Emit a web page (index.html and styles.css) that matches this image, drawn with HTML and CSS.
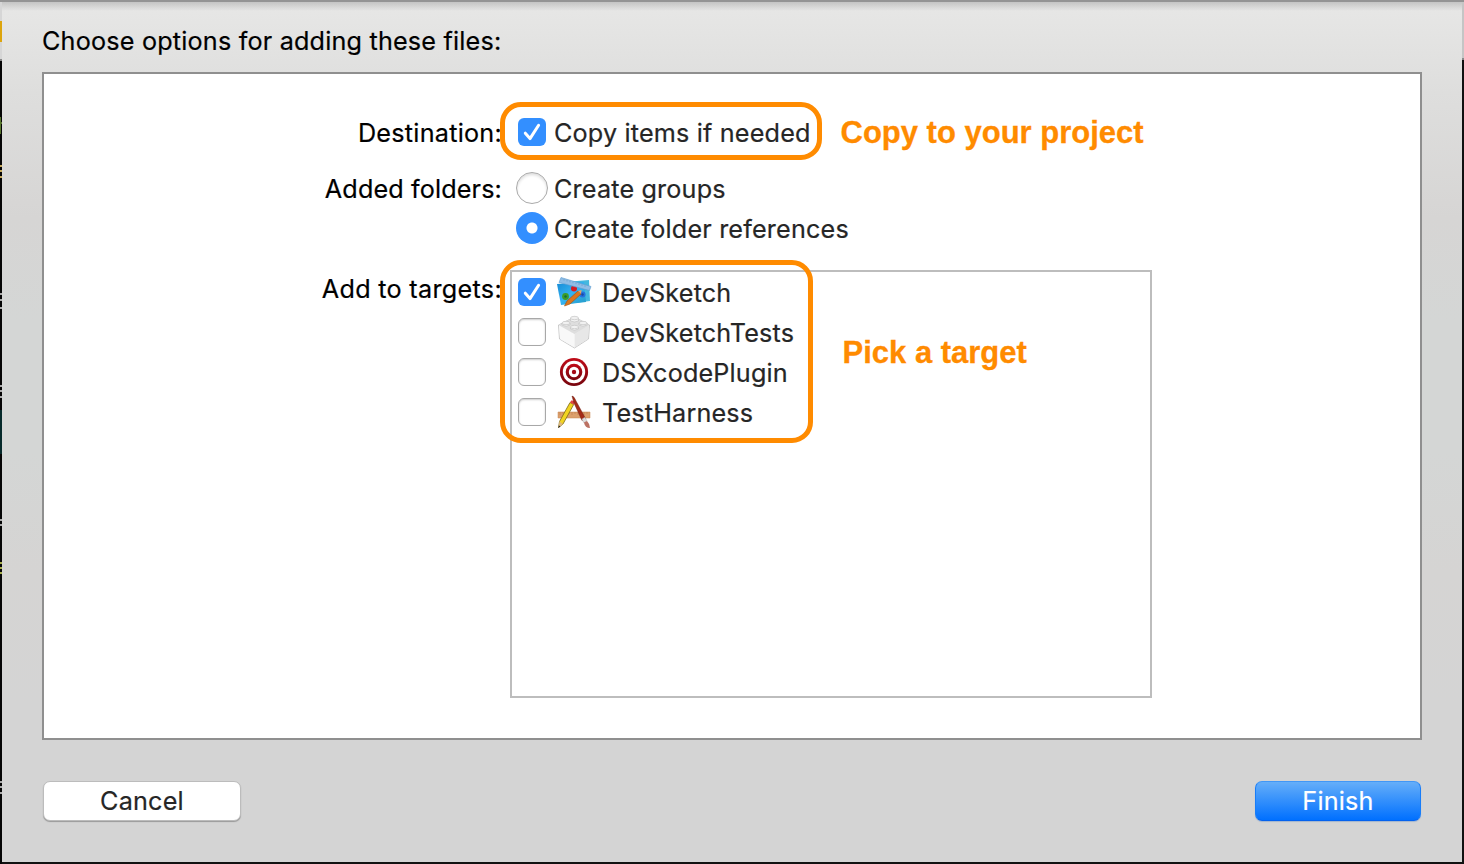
FILE: index.html
```html
<!DOCTYPE html>
<html lang="en">
<head>
<meta charset="utf-8">
<title>Add files</title>
<link rel="stylesheet" href="styles.css">
</head>
<body>
<div class="window">
  <svg class="edge" width="2" height="864" viewBox="0 0 2 864" aria-hidden="true">
    <rect width="2" height="60" fill="#d6d6d6"/><rect y="21" width="2" height="21" fill="#dda50d"/><rect y="59" width="2" height="2" fill="#888"/>
    <path d="M0 117h1v17h-1zM0 122h2v2h-2z" fill="#57752e"/>
    <path d="M0 165h2v2h-2zM0 170h2v2h-2zM0 176h2v2h-2z" fill="#c5a85b"/>
    <path d="M0 293h2v2h-2zM0 299h2v2h-2zM0 307h2v2h-2zM0 385h2v2h-2zM0 390h2v2h-2zM0 396h2v2h-2zM0 519h2v2h-2zM0 524h2v2h-2zM0 781h2v2h-2zM0 786h2v2h-2zM0 792h2v2h-2z" fill="#aaa"/>
    <rect y="410" width="2" height="44" fill="#062a2b"/>
    <path d="M0 562h2v2h-2zM0 567h2v2h-2zM0 572h2v2h-2z" fill="#a5ad4b"/>
  </svg>
  <main class="sheet">
    <h1 class="title">Choose options for adding these files:</h1>
    <section class="panel">
      <div class="row row-destination">
        <span class="label label-destination">Destination:</span>
        <label class="option"><span class="check checked"><svg viewBox="0 0 28 28"><path d="M7.3 15.2L12 20.6L20.6 7.3"/></svg></span><span>Copy items if needed</span></label>
        <span class="outline outline-copy"></span>
        <strong class="note note-copy">Copy to your project</strong>
      </div>
      <div class="row row-folders">
        <span class="label">Added folders:</span>
        <div class="stack">
          <label class="option"><span class="radio"></span><span>Create groups</span></label>
          <label class="option"><span class="radio selected"></span><span>Create folder references</span></label>
        </div>
      </div>
      <div class="row row-targets">
        <span class="label label-targets">Add to targets:</span>
        <div class="targets">
          <label class="target"><span class="check checked"><svg viewBox="0 0 28 28"><path d="M7.3 15.2L12 20.6L20.6 7.3"/></svg></span>
            <svg class="icon" viewBox="0 0 36 36">
              <defs><linearGradient id="card" x2="1" y2="1"><stop stop-color="#168ad5"/><stop offset=".5" stop-color="#35b3f2"/><stop offset="1" stop-color="#249bc7"/></linearGradient></defs>
              <path d="M9 8L33 6L34 27L11 30Z" fill="#45b8de"/><path d="M1 10L28 8L30 28L5 31Z" fill="url(#card)"/>
              <circle cx="18" cy="14.5" r="3" fill="#d51b22"/><circle cx="9.5" cy="22.5" r="3.4" fill="#3c9c28"/><circle cx="9.5" cy="22.5" r="1.2" fill="#17683a"/><circle cx="26.5" cy="20.5" r="3" fill="#2870dc"/><circle cx="26.5" cy="20.5" r="1.2" fill="#174da3"/>
              <path d="M5 3.5L35 12.5L33.5 16.5L3 8.5Z" fill="#90bde5" stroke="#5a9acf" stroke-width=".6"/><path d="M8 5v1.5m3-.6v1.5m3-.6v1.5m3-.6v1.5m3-.6v1.5m3-.6v1.5m3-.6v1.5m3-.6v1.5" stroke="#568fbd" stroke-width=".5"/>
              <path d="M22 17L25 20L14 30L8.5 32L11 27Z" fill="#dc751c" stroke="#9e5010" stroke-width=".6"/><path d="M22 17L25 20L25.5 16Z" fill="#e8a565"/>
            </svg><span>DevSketch</span></label>
          <label class="target"><span class="check"></span>
            <svg class="icon" viewBox="0 0 36 36">
              <path d="M2.5 11L18.5 3L33.5 11L32.5 25L18.5 34L3.5 25Z" fill="#f3f3f3" stroke="#b5b5b5" stroke-width=".7"/><path d="M18.5 20L33 11L32 25L18.5 33.5Z" fill="#e7e7e7"/><path d="M3 11L18.5 20V33.5L4 25Z" fill="#f8f8f8"/><path d="M2.5 11L18.5 3L33.5 11L18.5 20Z" fill="#dedede"/>
              <g fill="#f1f1f1" stroke="#bdbdbd" stroke-width=".6"><path d="M14.5 4v3q4 2 8 0V4"/><ellipse cx="18.5" cy="4" rx="4" ry="1.7"/><path d="M6 9v2q4.5 2.5 8 0V9"/><ellipse cx="10" cy="9" rx="4" ry="1.7"/><path d="M23 9v2q4 2.5 8 0V9"/><ellipse cx="27" cy="9" rx="4" ry="1.7"/><path d="M14.5 13v2q4 2.5 8 0v-2"/><ellipse cx="18.5" cy="13" rx="4" ry="1.7"/></g>
            </svg><span>DevSketchTests</span></label>
          <label class="target"><span class="check"></span>
            <svg class="icon" viewBox="0 0 36 36">
              <defs><linearGradient id="red" x2="0" y2="1"><stop stop-color="#c00b18"/><stop offset="1" stop-color="#76050d"/></linearGradient></defs>
              <circle cx="18" cy="18" r="14.1" fill="url(#red)"/><circle cx="18" cy="18" r="11.2" fill="#fff"/><circle cx="18" cy="18" r="8.3" fill="url(#red)"/><circle cx="18" cy="18" r="5.2" fill="#fff"/><circle cx="18" cy="18" r="2.2" fill="#a60814"/>
            </svg><span>DSXcodePlugin</span></label>
          <label class="target"><span class="check"></span>
            <svg class="icon" viewBox="0 0 36 36">
              <path d="M2 18H34V24H2Z" fill="#dca06c" stroke="#c78450" stroke-width=".5"/><path d="M4 18v3m3-3v2m3-2v3m3-3v2m3-2v3m3-3v2m3-2v3m3-3v2m3-2v3m3-3v2" stroke="#b87748" stroke-width=".5"/>
              <path d="M14 8.5L17.7 10.5L7 30L2.5 33.5L3.5 27.5Z" fill="#f2d421" stroke="#7c6815" stroke-width=".8"/><path d="M14 8.5L15.2 6.5Q18 6 19 8.3L17.7 10.5Z" fill="#e54643"/><path d="M3.5 27.5L7 30L2.5 33.5Z" fill="#dfb880"/><path d="M2.2 34L3 31.6L4.5 32.6Z" fill="#222"/>
              <path d="M16 2Q18 2 20 7L29.5 24.5L26 26.5L18 9Z" fill="#a42a16" stroke="#6d2016" stroke-width=".5"/><path d="M25.8 25L29 23.2L31 27L28 29Z" fill="#ddd" stroke="#999" stroke-width=".4"/><path d="M28 28.5L31 27Q34 30 34 34Q29 34 28 28.5Z" fill="#bb7163"/>
            </svg><span>TestHarness</span></label>
        </div>
        <span class="outline outline-targets"></span>
        <strong class="note note-target">Pick a target</strong>
      </div>
    </section>
    <footer class="actions">
      <button class="button cancel">Cancel</button>
      <button class="button finish">Finish</button>
    </footer>
  </main>
  <div class="edge-right"></div>
</div>
</body>
</html>
```
FILE: styles.css
```css
* { box-sizing: border-box; }
body { margin: 0; background: #111; font: 25.2px/40px Inter, sans-serif; letter-spacing: .17px; -webkit-text-stroke: .2px currentColor; color: #262626; }
.window { width: 1464px; height: 864px; overflow: hidden; display: grid; grid-template-columns: 2px 1460px 2px; border-top: 2px solid #949494; }
.edge { display: block; margin-top: -2px; background: #050505; }
.edge-right { background: linear-gradient(#c5c5c5 0 56px, #888 56px 58px, #111 58px); }
.sheet { height: 860px; padding: 19px 40px 0; background: linear-gradient(rgba(0,0,0,.15), transparent 9px), linear-gradient(#e7e7e6 0, #dededd 90px, #d6d5d4 215px, #d4d6d5 320px, #d4d6d5 450px, #d5d4d3 570px, #d4d4d4 700px); }
.title { margin: 0; height: 51px; font-size: 25.2px; font-weight: 400; line-height: 40px; letter-spacing: .19px; color: #000; white-space: nowrap; }
.panel { width: 1380px; height: 668px; padding-top: 39px; border: 2px solid #8f8f8f; background: #fff; }
.row { position: relative; display: flex; white-space: nowrap; }
.label { width: 458px; flex: none; text-align: right; letter-spacing: .13px; color: #000; }
.label-destination { letter-spacing: .25px; }
.label-targets { letter-spacing: .3px; }
.row-destination { height: 56px; }
.row-folders { height: 100px; }
.option { display: flex; align-items: center; height: 40px; margin-left: 14px; gap: 6px; }
.row-destination .option { margin-left: 16px; gap: 8px; }
.check { width: 28px; height: 28px; flex: none; border: 1px solid #a8a8a8; border-radius: 6px; background: #fff; box-shadow: inset 0 1px 2px #ccc; position: relative; top: -1px; }
.checked { border: 0; background: #338fff; box-shadow: none; }
.check svg { display: block; }
.check path { fill: none; stroke: #fff; stroke-width: 3; stroke-linecap: round; stroke-linejoin: round; }
.radio { width: 32px; height: 32px; flex: none; position: relative; top: -1px; border: 1.5px solid #aaa; border-radius: 50%; box-shadow: inset 0 2px 3px #ddd; }
.selected { border: 0; background: radial-gradient(circle, #fff 5px, #338fff 6px); box-shadow: none; }
.targets { width: 642px; height: 428px; margin: 1px 0 0 8px; padding-top: 1px; border: 2px solid #bdbdbd; }
.target { display: flex; align-items: center; height: 40px; padding-left: 6px; }
.icon { width: 36px; height: 36px; margin: 0 10px; flex: none; position: relative; top: -1px; }
.outline { position: absolute; border: 5px solid #ff8b00; border-radius: 21px; }
.outline-copy { left: 456px; top: -11px; width: 322px; height: 58px; }
.outline-targets { left: 456px; top: -9px; width: 313px; height: 183px; }
.note { color: #ff8b00; font: bold 31px/40px "Liberation Sans", sans-serif; letter-spacing: 0; -webkit-text-stroke: .3px #ff8b00; }
.note-copy { position: absolute; left: 796.5px; top: 0; }
.note-target { position: absolute; left: 798.5px; top: 64px; }
.actions { display: flex; justify-content: space-between; padding: 41px 1px 0; }
.button { height: 40px; padding: 0; border: 1px solid #bcbcbc; border-radius: 7px; font: inherit; letter-spacing: .2px; line-height: 36px; color: #262626; background: #fff; box-shadow: 0 1px 1px #999; }
.cancel { width: 198px; }
.finish { width: 166px; color: #fff; border-color: #4197f6 #187df9 #0462ee; background: linear-gradient(#65aef9, #0070ff); box-shadow: 0 1px 1px #a2b5ce; }
```
